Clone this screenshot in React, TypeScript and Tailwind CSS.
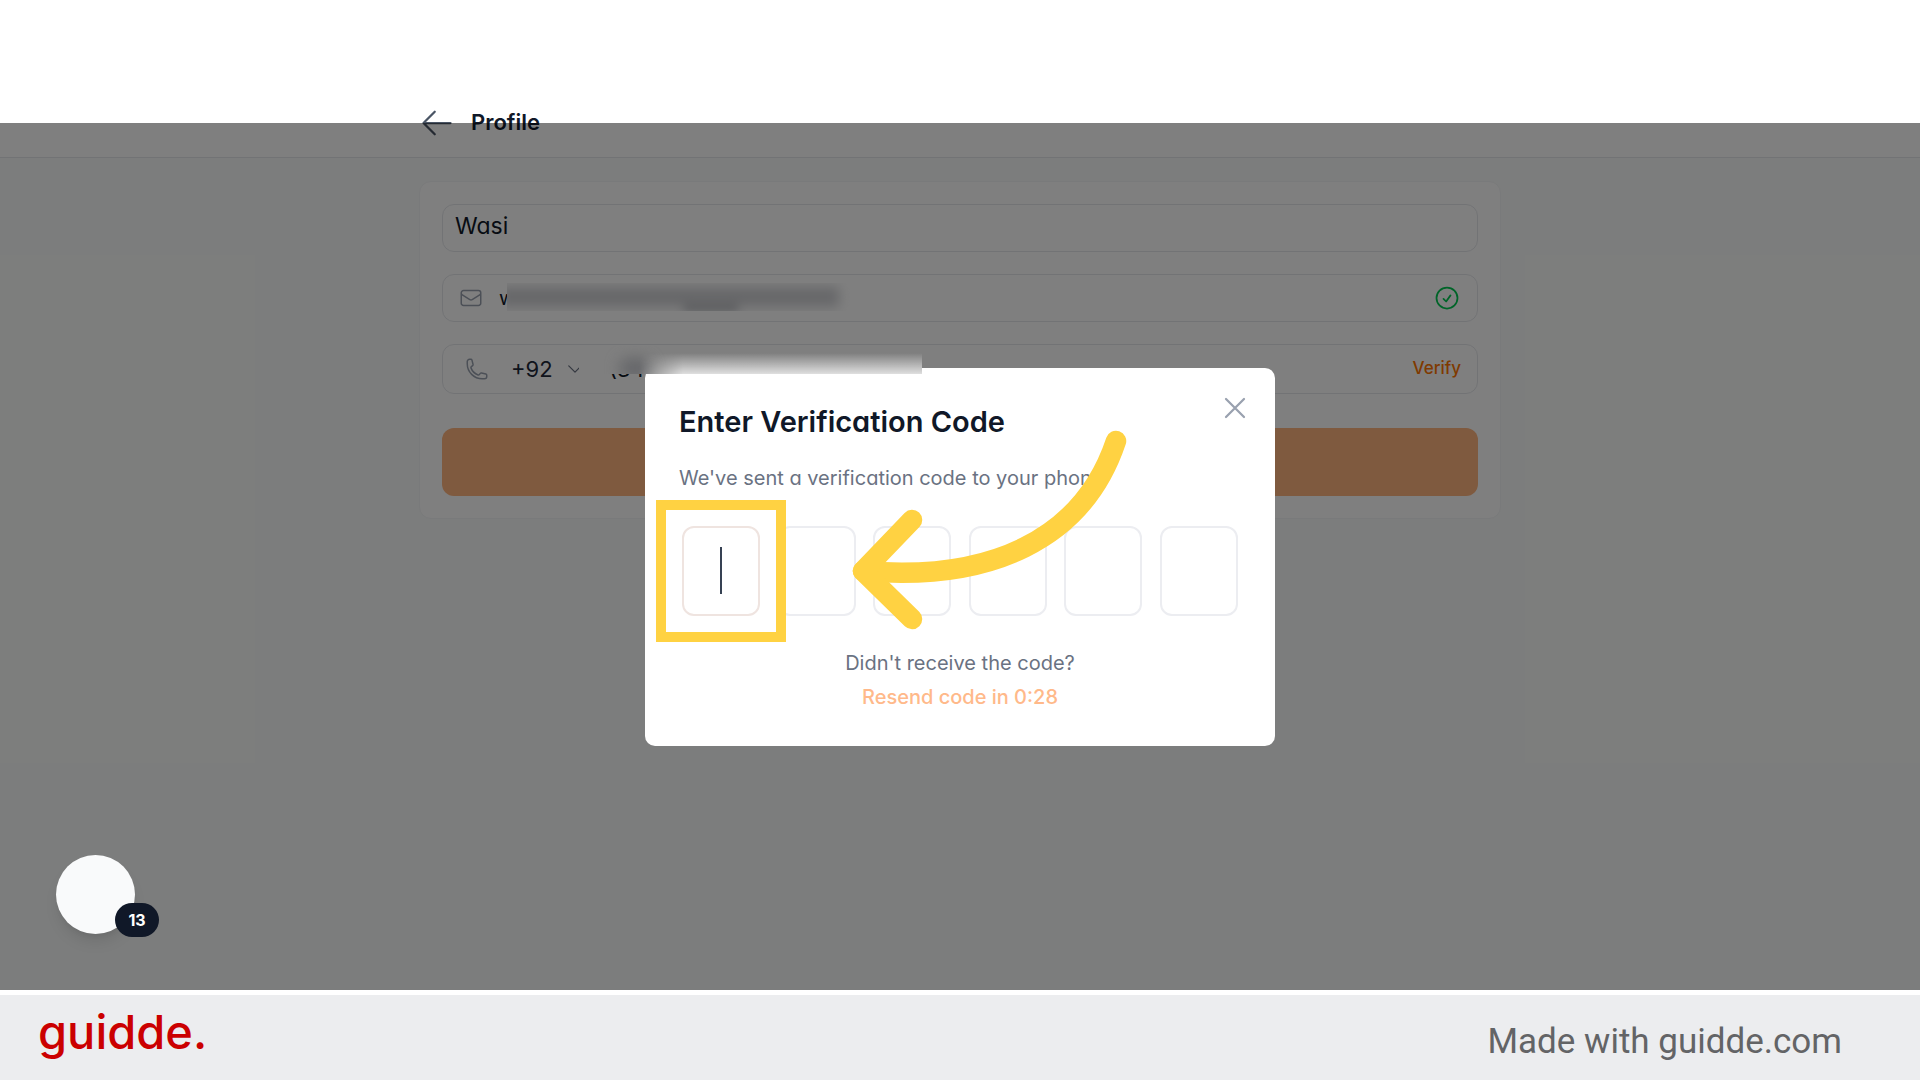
import { useState } from "react";
import {
  HiOutlineArrowLeft,
  HiOutlineCheckCircle,
  HiOutlineChevronDown,
  HiOutlineEnvelope,
  HiOutlinePhone,
  HiOutlineXMark,
} from "react-icons/hi2";

const CODE_LENGTH = 6;

function Header() {
  return (
    <header className="border-b border-gray-200 bg-white pt-[88px]">
      <div className="mx-auto flex h-[69px] max-w-[1078px] items-center gap-4">
        <button type="button" aria-label="Back" className="-ml-0.5 text-gray-600">
          <HiOutlineArrowLeft className="size-9" />
        </button>
        <h1 className="text-[22px] font-semibold text-gray-900">Profile</h1>
      </div>
    </header>
  );
}

function ProfileForm() {
  const [name, setName] = useState("Wasi");
  const [email, setEmail] = useState("w");
  const [phone, setPhone] = useState("(34");

  return (
    <form className="mx-auto mt-[23px] max-w-[1082px] rounded-xl border border-gray-100 bg-white p-[22px]">
      <div className="flex h-12 items-center rounded-xl border border-gray-200 px-3 pb-1">
        <input
          type="text"
          aria-label="Name"
          value={name}
          onChange={(e) => setName(e.target.value)}
          className="w-full bg-transparent text-[23px] text-gray-900 outline-none"
        />
      </div>

      <div className="relative mt-[22px] flex h-12 items-center rounded-xl border border-gray-200 px-4">
        <HiOutlineEnvelope className="size-6 shrink-0 text-gray-400" />
        <input
          type="text"
          aria-label="Email"
          value={email}
          onChange={(e) => setEmail(e.target.value)}
          className="ml-4 w-full bg-transparent text-xl text-gray-900 outline-none"
        />
        <HiOutlineCheckCircle className="size-7 shrink-0 text-green-500" />
        {/* Redacted address */}
        <div className="absolute top-2 left-16 h-7 w-[343px] overflow-hidden bg-white">
          <div className="mt-1 -ml-2 h-5 w-[340px] bg-[#cfd0d4] blur-[6px]" />
          <div className="-mt-1 ml-44 h-2 w-14 rounded-full bg-[#b4b6bb] blur-[5px]" />
        </div>
      </div>

      <div className="mt-[22px] flex h-[50px] items-center rounded-xl border border-gray-200 pr-4 pl-[22px]">
        <HiOutlinePhone className="size-6 shrink-0 text-gray-400" />
        <select
          aria-label="Country code"
          className="ml-[22px] appearance-none bg-transparent text-[22px] text-gray-800 outline-none"
        >
          <option>+92</option>
        </select>
        <HiOutlineChevronDown className="ml-3 size-5 shrink-0 text-gray-500" />
        <input
          type="tel"
          aria-label="Phone number"
          value={phone}
          onChange={(e) => setPhone(e.target.value)}
          className="ml-6 w-full bg-transparent text-[22px] text-gray-900 outline-none"
        />
        <button type="button" className="text-[17px] font-medium text-[#ff7400]">
          Verify
        </button>
      </div>

      <button
        type="submit"
        aria-label="Save"
        className="mt-[34px] block h-[68px] w-full rounded-xl bg-[#ffb47e]"
      />
    </form>
  );
}

function CodeInputs() {
  return (
    <div className="mt-8 flex justify-between px-[3px]">
      {Array.from({ length: CODE_LENGTH }, (_, i) => (
        <div key={i} className="relative">
          <input
            type="text"
            inputMode="numeric"
            maxLength={1}
            aria-label={`Digit ${i + 1}`}
            className={`block h-[90px] w-[78px] rounded-xl border-2 bg-white text-center text-3xl text-gray-900 outline-none ${
              i === 0 ? "border-[#efe4e0]" : "border-[#ecedf1]"
            }`}
          />
          {i === 0 && (
            <>
              <span className="absolute top-[21px] left-[38px] h-[47px] w-0.5 bg-gray-700" />
              <span className="absolute -inset-[26px] z-10 border-10 border-[#ffd242]" />
            </>
          )}
        </div>
      ))}
    </div>
  );
}

function Arrow() {
  return (
    <svg
      viewBox="0 0 285 205"
      className="pointer-events-none absolute top-[60px] left-[200px] z-20 h-[205px] w-[285px]"
      fill="none"
      stroke="#ffd242"
      strokeWidth="20.5"
      strokeLinecap="round"
      strokeLinejoin="round"
      aria-hidden="true"
    >
      <path d="M271 13C238 112 145 154 18 143" />
      <path d="M67 92L18 143L67 191" />
    </svg>
  );
}

function VerificationModal() {
  return (
    <div
      role="dialog"
      aria-labelledby="verify-title"
      className="relative w-full max-w-[630px] rounded-[10px] bg-white px-[34px] pt-[34px] pb-8"
    >
      <h2 id="verify-title" className="text-[29px] leading-10 font-semibold text-gray-900">
        Enter Verification Code
      </h2>
      <p className="mt-5 text-xl leading-8 text-gray-500">
        We've sent a verification code to your phone
      </p>
      <button
        type="button"
        aria-label="Close"
        className="absolute top-[22px] right-[22px] text-gray-400"
      >
        <HiOutlineXMark className="size-9" />
      </button>

      <CodeInputs />

      <div className="mt-[30px] text-center text-xl leading-[34px]">
        <p className="text-gray-500">Didn't receive the code?</p>
        <button type="button" disabled className="font-medium text-[#ffb98a]">
          Resend code in 0:28
        </button>
      </div>

      <Arrow />

      {/* Redacted number, runs over the top edge of the dialog */}
      <div className="absolute -top-[22px] -left-[66px] h-7 w-[343px] overflow-hidden bg-[#7f7f7f]">
        <div className="absolute top-3 left-10 h-5 w-8 rounded-full bg-[#66676a] blur-[7px]" />
        <div className="absolute inset-y-0 right-0 left-[60px] bg-linear-to-b from-transparent from-25% to-white/75 mask-[linear-gradient(to_right,transparent,black_44px)]" />
      </div>
    </div>
  );
}

function Bubble() {
  return (
    <button
      type="button"
      className="absolute bottom-14 left-14 z-30 size-[79px] rounded-full bg-gray-50 shadow-lg"
    >
      <span className="absolute -right-6 -bottom-[3px] flex h-[34px] w-11 items-center justify-center rounded-full bg-gray-900 text-base font-bold text-white">
        13
      </span>
    </button>
  );
}

function Footer() {
  return (
    <footer className="mt-[5px] flex h-[85px] items-center justify-between bg-[#ecedef] pr-[78px] pl-[38px]">
      <a href="#home" className="pb-3 text-[47px] leading-none font-medium text-[#cb0000]">
        guidde.
      </a>
      <a href="#about" className="pt-2 font-[Roboto,sans-serif] text-[35px] leading-none text-[#636466]">
        Made with guidde.com
      </a>
    </footer>
  );
}

export default function App() {
  return (
    <div className="flex min-h-screen flex-col bg-white font-[Inter,sans-serif] [font-feature-settings:'cv11']">
      <main className="relative flex-1 bg-[#f9fbfa]">
        <Header />
        <ProfileForm />
        <div className="absolute inset-x-0 top-[123px] bottom-0 flex items-center justify-center bg-black/50">
          <VerificationModal />
        </div>
        <Bubble />
      </main>
      <Footer />
    </div>
  );
}
